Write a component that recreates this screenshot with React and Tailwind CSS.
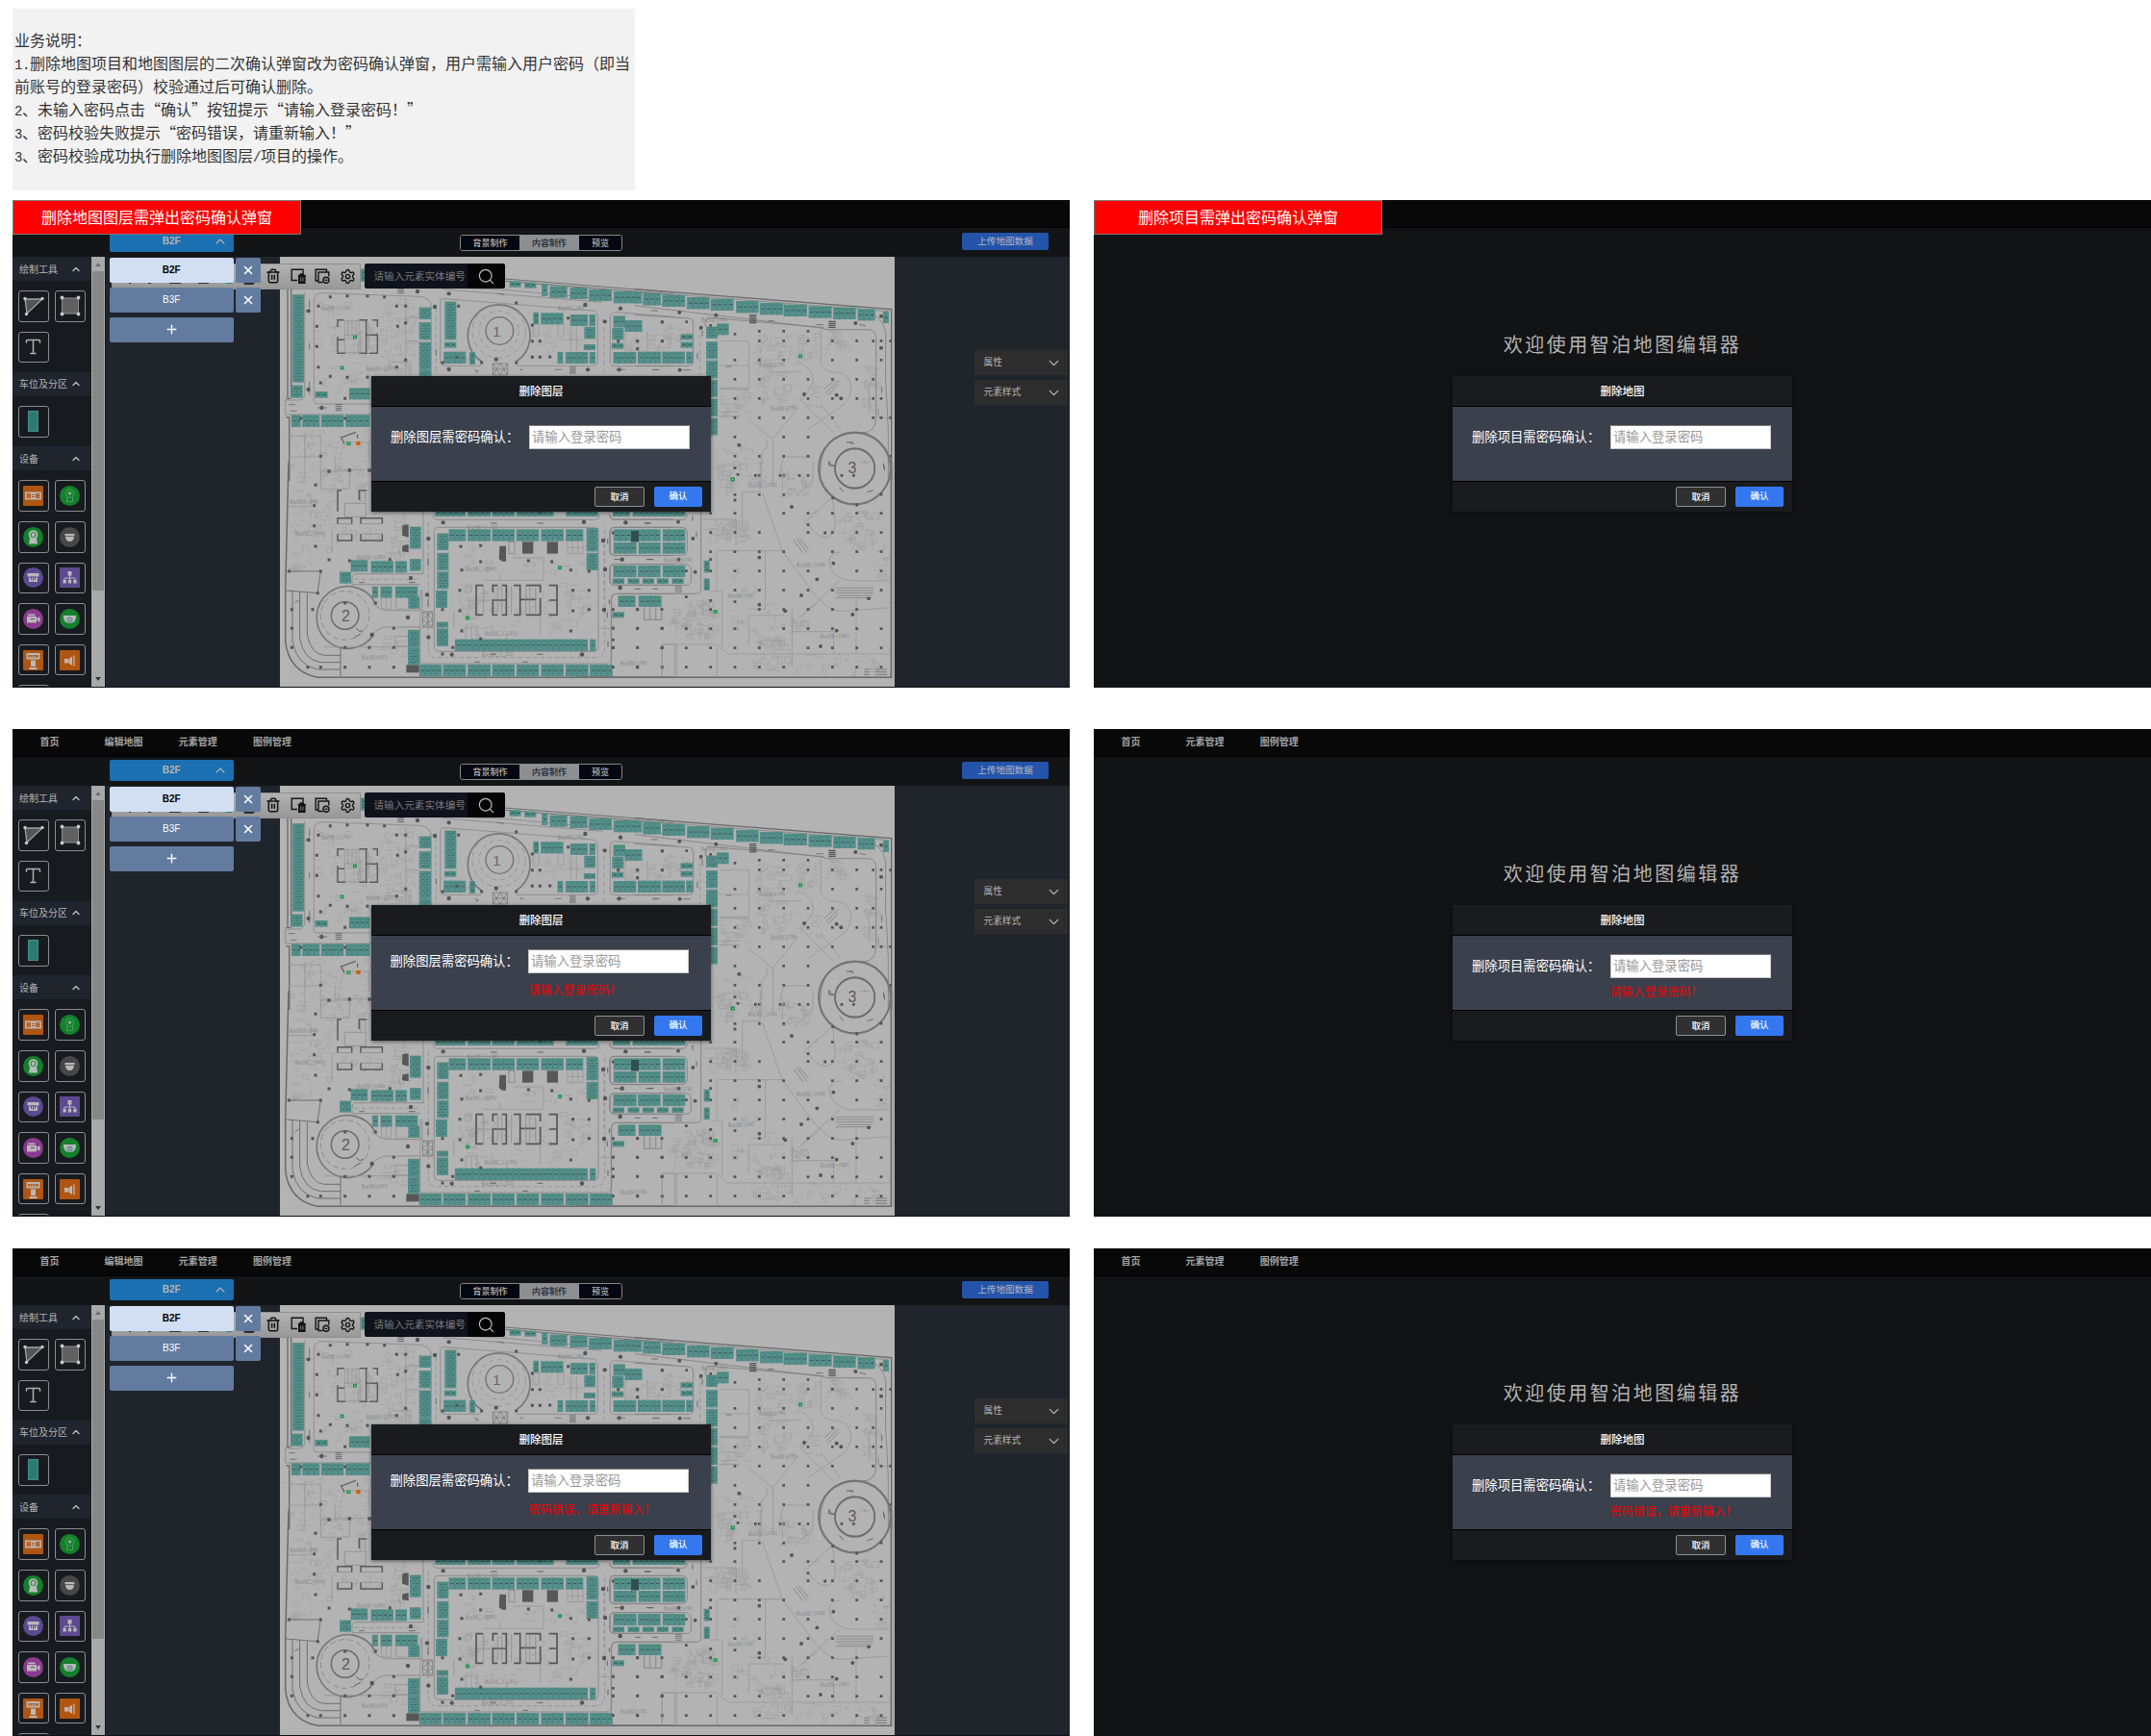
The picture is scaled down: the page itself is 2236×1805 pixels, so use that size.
import React from "react";
import { ChevronUp, ChevronDown, X, Plus, Search, Settings, Trash2, Type } from "lucide-react";

/* ---------- parking map ---------- */

// A block of parking bays; each bay gets a divider, a dash and a green lamp.
function Bays({ list }) {
  return list.map(([x, y, w, h, dir], i) => {
    const vertical = dir === "v";
    const length = vertical ? h : w;
    const n = Math.max(1, Math.round(length / 18));
    const step = length / n;
    let div = "";
    let dash = "";
    let lamp = "";
    for (let k = 0; k < n; k++) {
      const o = k * step;
      if (vertical) {
        div += `M${x} ${y + o}h${w}`;
        dash += `M${x + w * 0.25} ${y + o + step / 2}h5M${x + w * 0.6} ${y + o + step / 2}h5`;
        lamp += `M${x + w - 8} ${y + o + step / 2 - 2}h5`;
      } else {
        div += `M${x + o} ${y}v${h}`;
        dash += `M${x + o + step * 0.22} ${y + h / 2}h${step * 0.56}`;
        lamp += `M${x + o + step / 2 - 3} ${y + 6}h5`;
      }
    }
    if (vertical) div += `M${x + w / 2} ${y}v${h}`;
    return (
      <g key={i}>
        <rect x={x} y={y} width={w} height={h} fill="#568f8b" />
        <path d={div} stroke="#467673" strokeWidth="1.8" />
        <path d={dash} stroke="#2d5654" strokeWidth="2.8" />
        <path d={lamp} stroke="#2a8f55" strokeWidth="3.4" />
      </g>
    );
  });
}

function Dots({ list, r = 4.5 }) {
  return (
    <path
      d={list.map(([x, y]) => `M${x - r} ${y - r}h${r * 2}v${r * 2}h${-r * 2}z`).join("")}
      fill="#555"
    />
  );
}

function Lamps({ list }) {
  return list.map(([x, y], i) => (
    <g key={i}>
      <rect x={x - 6} y={y - 5} width="12" height="11" fill="#15944a" />
      <rect x={x - 2} y={y - 1} width="4" height="3" fill="#a6d8b8" />
    </g>
  ));
}

// Seeded scatter of fine construction lines inside the room areas.
function fineLines(seed, areas) {
  let s = seed;
  const rnd = () => {
    s = (s * 16807) % 2147483647;
    return s / 2147483647;
  };
  for (let i = 0; i < 8; i++) rnd();
  let d = "";
  areas.forEach(([x, y, w, h, n]) => {
    for (let i = 0; i < n; i++) {
      const px = x + rnd() * w;
      const py = y + rnd() * h;
      const a = 4 + rnd() * 20;
      const b = 4 + rnd() * 16;
      const k = Math.floor(rnd() * 4);
      d += `M${px.toFixed(0)} ${py.toFixed(0)}`;
      if (k === 0) d += `h${a.toFixed(0)}v${b.toFixed(0)}`;
      else if (k === 1) d += `v${b.toFixed(0)}h${(-a).toFixed(0)}`;
      else if (k === 2) d += `h${a.toFixed(0)}`;
      else d += `h${a.toFixed(0)}v${b.toFixed(0)}h${(-a).toFixed(0)}z`;
    }
  });
  return d;
}

const NW_BAYS = [
  [72, 230, 36, 273, "v"], [67, 513, 37, 38, "v"], [467, 270, 37, 36, "v"], [467, 317, 37, 53, "v"],
  [467, 378, 37, 84, "v"], [467, 464, 37, 20, "v"], [547, 252, 36, 118, "v"], [547, 377, 36, 18],
  [545, 407, 68, 37], [624, 410, 18, 37, "v"], [144, 531, 38, 20], [250, 520, 64, 36],
  [70, 604, 28, 38], [104, 604, 53, 38], [163, 604, 69, 38], [239, 604, 74, 38],
  [823, 286, 17, 36, "v"], [848, 286, 69, 36], [940, 291, 53, 36], [999, 291, 18, 36],
  [982, 331, 35, 36, "v"], [982, 384, 35, 18], [900, 408, 16, 36], [925, 408, 69, 36], [1000, 408, 17, 36],
  [1074, 295, 36, 36], [1110, 309, 53, 36], [1069, 334, 36, 36, "v"], [1069, 380, 36, 18],
  [1074, 408, 70, 36], [1151, 408, 70, 36], [1228, 408, 68, 36], [1302, 408, 20, 36],
  [750, 187, 35, 19], [797, 191, 35, 18], [851, 197, 17, 37], [876, 203, 53, 36], [939, 207, 53, 36],
  [998, 213, 70, 36], [1075, 219, 87, 37], [1168, 225, 53, 37], [1228, 230, 32, 37],
  [285, 150, 14, 38, "v"],
];

const NE_BAYS = [
  [0, 220, 21, 36], [27, 224, 54, 38], [87, 230, 70, 37], [164, 237, 69, 37], [238, 242, 70, 37],
  [317, 249, 69, 37], [391, 255, 71, 37], [465, 260, 72, 37], [543, 265, 71, 37], [620, 269, 69, 37],
  [696, 274, 53, 36], [775, 282, 17, 36],
  [257, 319, 36, 36], [144, 352, 37, 18], [144, 377, 37, 18], [12, 407, 70, 37], [87, 407, 69, 37], [162, 407, 18, 37],
  [222, 330, 36, 36, "v"], [222, 377, 36, 53, "v"], [222, 436, 36, 54, "v"], [222, 496, 36, 53, "v"],
  [222, 555, 36, 54, "v"], [222, 615, 36, 53, "v"],
];

const SW_BAYS = [
  [438, 204, 35, 68, "v"], [438, 305, 35, 36, "v"], [255, 307, 52, 36], [318, 310, 69, 36], [394, 310, 35, 36],
  [219, 345, 36, 35, "v"], [322, 389, 17, 36], [348, 389, 35, 36], [394, 389, 69, 36], [433, 423, 35, 36, "v"],
  [432, 526, 36, 53, "v"], [432, 581, 36, 53, "v"],
  [518, 150, 94, 21], [620, 150, 70, 21], [696, 150, 69, 21], [772, 150, 115, 21], [926, 150, 98, 21],
  [1073, 150, 52, 21], [1140, 150, 110, 21],
  [523, 225, 36, 51, "v"], [523, 286, 36, 53, "v"], [523, 344, 36, 53, "v"], [519, 403, 36, 53, "v"],
  [522, 501, 36, 17, "v"], [522, 522, 36, 54, "v"],
  [561, 211, 52, 37], [620, 211, 70, 37], [696, 211, 69, 37], [772, 211, 69, 37], [849, 211, 69, 37], [926, 211, 53, 37],
  [989, 209, 36, 71, "v"], [989, 286, 36, 53, "v"], [580, 554, 413, 37], [1001, 554, 17, 37],
  [469, 633, 69, 37], [543, 633, 70, 37], [620, 633, 70, 37], [696, 633, 69, 37], [772, 633, 69, 37],
  [849, 633, 69, 37], [925, 633, 70, 37], [1001, 633, 70, 37],
];

const SE_BAYS = [
  [0, 150, 65, 21], [114, 150, 34, 21], [174, 150, 86, 21], [268, 150, 70, 21],
  [115, 211, 145, 37], [268, 211, 69, 37], [115, 252, 70, 35], [193, 252, 67, 35], [268, 252, 69, 35],
  [114, 324, 71, 36], [191, 324, 69, 36], [268, 324, 69, 36],
  [112, 364, 35, 17], [159, 364, 35, 17], [205, 364, 35, 17], [250, 364, 35, 17], [297, 364, 35, 17],
  [129, 418, 53, 35], [193, 418, 70, 35], [111, 469, 36, 18],
  [395, 310, 18, 36, "v"], [395, 366, 18, 36, "v"],
];

const seColumns = [];
for (let r = 0; r < 9; r++) {
  for (let c = 0; c < 12; c++) {
    const x = 112 + c * 76;
    const y = 161 + r * 60;
    if (y < 500 && x < 400) continue;
    if ((r * 7 + c * 5) % 6 === 0) continue;
    seColumns.push([x, y]);
  }
}
const neColumns = [];
for (let r = 0; r < 9; r++) {
  for (let c = 0; c < 7; c++) {
    if ((r * 5 + c * 3) % 7 === 0) continue;
    if (r > 4 && c > 3 && c < 6) continue;
    neColumns.push([312 + c * 76, 373 + r * 60]);
  }
}

const ZONES = [
  [43, 53, "防火分区十六(702)"], [90, 116, "防火分区十五(387)"], [289, 53, "防火分区二(391)"],
  [438, 65, "防火分区六(361)"], [498, 112, "防火分区五(789)"], [510, 157, "防火分区五(795)"],
  [10, 254, "防火分区十八(301)"], [16, 287, "防火分区二十(602)"], [80, 312, "防火分区十九(803)"],
  [195, 281, "防火分区二十一(207)"], [193, 324, "防火分区二十四(402)"], [213, 391, "防火分区二十二(201)"],
  [210, 413, "防火分区二十二(222)"], [85, 416, "防火分区九(872)"], [354, 422, "防火分区九(793)"],
  [487, 237, "防火分区三(1142)"], [537, 320, "防火分区三(1540)"], [466, 352, "防火分区十(587)"],
  [562, 394, "防火分区一(1907)"], [399, 315, "防火分区二(1730)"],
];

function ParkingMap() {
  return (
    <svg viewBox="0 0 639 447" className="block h-[447px] w-[639px]" fill="none">
      <rect width="639" height="447" fill="#b3b3b3" />

      <g transform="translate(-11 -37) scale(.33333)">
        <path
          d={fineLines(11, [[140, 250, 110, 140, 26], [340, 240, 110, 230, 70], [160, 440, 250, 80, 30], [820, 330, 160, 60, 20], [1110, 345, 150, 60, 28], [60, 650, 260, 160, 60], [215, 310, 120, 100, 30], [600, 410, 40, 30, 3]])}
          stroke="#9e9e9e" strokeWidth="1.6"
        />
        <path d="M735 180L1260 222M735 187L1260 229" stroke="#6d6d6d" strokeWidth="3" />
        <path d="M68 212V550M52 553h15M52 612h10V810M57 210v340" stroke="#6a6a6a" strokeWidth="4" />
        <path
          d="M110 222V540Q110 558 90 558H50V603H318M139 250Q139 224 165 224L470 235Q505 240 505 270V484M139 250V560Q139 570 150 570H318M533 250Q533 242 548 242L1010 279Q1024 281 1024 300V440Q1024 451 1010 451H770M660 451H548Q533 451 533 436V250M1063 300Q1063 283 1080 284L1260 298M1063 300V440Q1063 452 1080 452H1260M533 484H1260M430 200L735 214 1260 262M540 212L1040 253"
          stroke="#858585" strokeWidth="2.4"
        />
        <path d="M520 270V480M1043 330V470" stroke="#8a8a8a" strokeWidth="2" strokeDasharray="16 10" />
        <path d="M662 438A97 97 0 1 1 770 438" stroke="#777" strokeWidth="5" />
        <circle cx="716" cy="343" r="83" stroke="#8a8a8a" strokeWidth="2" strokeDasharray="18 12" />
        <circle cx="716" cy="343" r="62" stroke="#8a8a8a" strokeWidth="2" strokeDasharray="14 12" />
        <circle cx="718" cy="342" r="43" stroke="#707070" strokeWidth="4" />
        <text x="709" y="360" textAnchor="middle" fontSize="46" fill="#666" fontFamily="Liberation Sans, sans-serif">1</text>
        <path d="M697 444h46v36h-46zM697 444l23 36 23-36M697 480l23-36 23 36M697 462h46" stroke="#777" strokeWidth="2.4" />
        <path d="M400 206h20M400 212h20M400 218h20M400 224h20M936 456h20M936 462h20M936 468h20M936 474h20M206 572h20M206 578h20M206 584h20M206 590h20" stroke="#666" strokeWidth="3" />
        <path d="M213 330V308h20M213 360v52h25M280 308h26M322 308h15v22M337 350v62h-26M302 308v104M213 370h22M280 412h26M302 355h34" stroke="#5c5c5c" strokeWidth="4.5" />
        <path d="M235 310h44v100h-44zM245 310v44M258 310v44M270 310v44M235 354h44M310 320v80M285 340v72" stroke="#8e8e8e" strokeWidth="2" />
        <path d="M225 675l45-17M222 672l12 22M275 665v12" stroke="#666" strokeWidth="4" />
        <path d="M425 240v240M425 300h42M425 374h42M142 250L200 270M380 440h60v40M880 320M900 320v40h18v-40M823 320v40h18v-40M940 330v74M958 330v74M925 370h50M1110 345v60M1180 345v60M60 670h100v130M60 735h100M110 660v140M205 735v40h110M250 690h60v55" stroke="#939393" strokeWidth="2" />
        <Bays list={NW_BAYS} />
        <Dots list={[[190, 236], [243, 233], [306, 233], [359, 236], [397, 265], [425, 265], [400, 328], [425, 317], [397, 455], [425, 433], [153, 265], [148, 328], [148, 391], [153, 455], [190, 484], [243, 487], [306, 487], [160, 504], [236, 553], [590, 265], [585, 424], [540, 441], [662, 441], [770, 441], [770, 255], [820, 324], [844, 374], [820, 374], [875, 423], [820, 424], [844, 424], [932, 302], [1225, 315], [1148, 374], [1225, 374], [1088, 374], [1148, 398], [186, 780], [250, 777], [312, 777], [160, 733], [98, 615], [236, 615]]} />
        <g fill="#555">
          {[[122, 280], [122, 525], [516, 267], [462, 219], [560, 226], [707, 431], [560, 462], [985, 261], [1095, 272], [1046, 313], [993, 463], [1091, 463], [163, 582]].map(([x, y]) => (
            <circle key={`${x}-${y}`} cx={x} cy={y} r="6.5" />
          ))}
        </g>
        <path d="M125 245v25M125 380v20M125 500v40M520 400v20M640 463l12 5-8 5M780 463h12M890 463h22M1080 463h30M1195 463h22M150 582h30M60 572h20M65 592h20M710 225l22 4" stroke="#666" strokeWidth="2.4" />
        <Lamps list={[[267, 361], [227, 457], [247, 693]]} />
        <rect x="271" y="687" width="13" height="12" fill="#c8601c" />
      </g>

      <g transform="translate(369 -37) scale(.33333)">
        <path
          d={fineLines(29, [[380, 350, 180, 90, 70], [380, 450, 90, 110, 50], [260, 520, 80, 90, 30], [85, 315, 80, 60, 22], [705, 440, 50, 160, 34], [600, 335, 60, 60, 18], [480, 490, 110, 90, 16], [250, 700, 130, 100, 24]])}
          stroke="#9e9e9e" strokeWidth="1.6"
        />
        <path d="M0 212L800 275V810" stroke="#686868" strokeWidth="4" />
        <path d="M0 219L792 281" stroke="#777" strokeWidth="2" />
        <path
          d="M0 263L580 333 600 338H725Q752 338 752 365V610Q752 660 710 660 640 655 600 700 575 735 578 810M0 292L170 303Q182 305 182 318V436Q182 451 168 451H0M220 330V310Q222 300 235 301L590 332M715 283Q770 290 782 345V500Q786 560 790 650V810"
          stroke="#808080" strokeWidth="2.6"
        />
        <path d="M203 330V480" stroke="#8a8a8a" strokeWidth="2" strokeDasharray="14 10" />
        <path
          d="M265 374h90v150h-90M265 520h90M580 340V440Q585 470 630 472 672 475 674 520 672 560 640 580L540 650M355 620L430 680 510 580M510 440Q560 460 556 505L520 560 620 660M430 680V810M410 680Q420 700 395 720V810M450 810Q455 740 470 735H550M580 575L620 620 640 650M730 500V600M420 470h100M265 450h90M760 583v30h40M265 570h60M265 595h60M265 608h60"
          stroke="#949494" strokeWidth="2.2"
        />
        <path d="M590 525l34-30M597 535l38-38M603 542l32-34" stroke="#888" strokeWidth="3" />
        <path d="M357 293h22M357 299h22M357 305h22M357 311h22M357 317h22M604 313h22M604 319h22M604 325h22M604 331h22" stroke="#555" strokeWidth="3.4" />
        <circle cx="685" cy="772" r="112" stroke="#777" strokeWidth="5" />
        <circle cx="686" cy="772" r="62" stroke="#707070" strokeWidth="4.5" />
        <text x="678" y="785" textAnchor="middle" fontSize="48" fill="#5c5c5c" fontFamily="Liberation Sans, sans-serif">3</text>
        <path d="M605 748l8 15h14M670 690l12 5M775 755l4 20M660 690h20" stroke="#666" strokeWidth="3" />
        <path d="M702 752h30M718 746v10" stroke="#8c8c8c" strokeWidth="2" />
        <Bays list={NE_BAYS} />
        <Dots r={4} list={[[85, 314], [161, 314], [85, 374], [8, 398], [8, 374], [236, 325], [388, 343], [464, 343], [540, 343], [312, 352], [743, 374], [743, 493], [743, 553], [743, 613], [797, 374], [797, 613], [797, 733], ...neColumns.filter(([x, y]) => !(x > 560 && y > 640))]} />
        <g fill="#555">
          {[[139, 284], [253, 293], [206, 332], [140, 464], [688, 318], [768, 395], [629, 542], [643, 553], [528, 540], [325, 698], [768, 296]].map(([x, y]) => (
            <circle key={`${x}-${y}`} cx={x} cy={y} r="6" />
          ))}
        </g>
        <path d="M52 279h20M55 464h20M150 464h24M415 311h20M565 323h22M700 322l20 4M770 515v20M195 410v20M210 340v20M285 453h16" stroke="#666" strokeWidth="2.6" />
        <Lamps list={[[516, 421], [305, 805]]} />
      </g>

      <g transform="translate(-11 213) scale(.33333)">
        <path
          d={fineLines(47, [[60, 0, 250, 80, 30], [60, 90, 140, 200, 50], [380, 160, 50, 130, 30], [215, 200, 130, 40, 12], [590, 380, 50, 110, 30], [905, 380, 80, 130, 30], [590, 260, 100, 100, 12], [760, 295, 220, 60, 16], [600, 495, 300, 45, 18], [645, 390, 250, 85, 34], [350, 530, 80, 60, 16], [70, 310, 80, 20, 8]])}
          stroke="#9d9d9d" strokeWidth="1.6"
        />
        <path d="M60 0L50 400V560Q60 655 150 673H1260" stroke="#6a6a6a" strokeWidth="4.5" />
        <path d="M55 342H160L150 410 52 402M72 402V560Q85 635 150 648H222M95 406V550Q105 618 160 626H222M118 410V540Q130 600 170 604H222M222 578V670" stroke="#6e6e6e" strokeWidth="3" />
        <path
          d="M480 155V350H270Q258 350 258 366V383H470M510 165Q510 181 525 181H1015Q1030 181 1030 165M514 215Q514 205 530 205H1012Q1026 205 1026 220V575Q1026 592 1010 592H530Q514 592 514 575V215M320 440Q345 463 370 464H476V400M320 540Q340 516 370 516H470V630H1050Q1067 630 1067 610V430Q1067 412 1085 412H1260M1060 165Q1062 180 1075 180H1260M1061 220Q1062 205 1075 205H1260M1061 220V280Q1062 293 1075 293H1260M1061 335Q1062 320 1075 320H1260M1061 335V370Q1062 385 1075 385H1260"
          stroke="#858585" strokeWidth="2.6"
        />
        <path d="M265 367H470M496 190V590Q500 610 520 611H1020Q1045 608 1046 580V200" stroke="#858585" strokeWidth="2" strokeDasharray="14 9" />
        <path d="M478 468h31v48h-31zM478 468l31 24-31 24M509 468l-31 24 31 24M494 468v48" stroke="#777" strokeWidth="2.4" />
        <path d="M330 440A97 97 0 1 0 325 540" stroke="#777" strokeWidth="5" />
        <circle cx="236" cy="480" r="76" stroke="#808080" strokeWidth="2.4" strokeDasharray="18 10" />
        <circle cx="236" cy="480" r="43" stroke="#6c6c6c" strokeWidth="4.5" />
        <text x="238" y="497" textAnchor="middle" fontSize="48" fill="#5c5c5c" fontFamily="Liberation Sans, sans-serif">2</text>
        <path d="M213 155V90h12M280 120V90h24M213 194v-18h44v18M285 194v-18h67v18M213 226v20h44v-20M285 226v20h67v-20" stroke="#595959" strokeWidth="4.5" />
        <path d="M235 130h66v42h-66zM285 90v36M299 90v36M213 194h44M213 226h44M285 194h67M285 226h67" stroke="#8a8a8a" strokeWidth="2.4" />
        <path d="M645 386v92M643 386h24M643 478h24M712 386h-15v22M697 430v48h15M725 386h14v92h-14M762 386h20v92h-20M800 386h45v22M845 425v53h-45M872 386h25v92h-25M782 430h50M697 432h40M872 432h25" stroke="#555" strokeWidth="5" />
        <path d="M668 388v88M755 388v88M800 388v88M812 388v88M712 395v75M725 395v75M830 395v75M645 432h50" stroke="#898989" strokeWidth="2.2" />
        <g fill="#575757">
          <rect x="789" y="250" width="34" height="37" /><rect x="866" y="250" width="34" height="37" />
          <path d="M718 263h20v48h-12l-10-8zM415 198l19-2v40l-20-6zM415 262l19-3v24l-20-3z" /><rect x="427" y="634" width="40" height="24" />
        </g>
        <rect x="747" y="250" width="18" height="37" stroke="#858585" strokeWidth="2.4" />
        <path d="M930 250v37h48v-37M945 250v37M962 250v37M932 268h46M350 425v34h30v-34M365 425v34M395 425v34h35M470 526V400M392 545h40M392 575h40M392 545v30M612 516v40M630 516v40M648 516v40M612 516h36M575 516v-50M665 370h190V300H760M720 350v20M845 540v-60M1025 520h46M160 30h90v55h-90zM60 140h70v-30M195 200v80M170 578h260M1225 570h40v100M1225 570v100M1170 455v38M1188 455v38M1206 455v38M1224 455v38M1170 493h54" stroke="#909090" strokeWidth="2.2" />
        <Bays list={SW_BAYS} />
        <rect x="1128" y="216" width="24" height="34" fill="#314f4d" />
        <Dots list={[[186, 30], [250, 27], [312, 27], [144, 73], [140, 137], [140, 200], [144, 264], [186, 306], [250, 309], [376, 305], [62, 342], [160, 342], [135, 461], [151, 410], [70, 461], [70, 520], [70, 580], [236, 441], [236, 580], [236, 641], [312, 580], [312, 641], [388, 520], [388, 580], [388, 641], [120, 641], [160, 641], [331, 441], [597, 265], [659, 262], [659, 312], [600, 338], [594, 401], [594, 465], [600, 528], [659, 553], [808, 309], [881, 312], [940, 338], [947, 401], [947, 465], [940, 528], [997, 342], [997, 401], [997, 461], [572, 580], [540, 461], [540, 600], [845, 160], [1072, 222], [1148, 222], [1072, 461], [1148, 461], [1072, 520], [1148, 520], [1148, 580], [1072, 580], [1148, 641], [1225, 641], [1225, 520], [1225, 580]]} />
        <g fill="#555">
          {[[542, 190], [981, 188], [1111, 190], [496, 240], [1041, 246], [441, 363], [492, 415], [432, 486], [496, 548], [569, 602], [975, 601], [1044, 462], [1047, 336], [1094, 393], [1100, 305], [320, 540]].map(([x, y]) => (
            <circle key={`${x}-${y}`} cx={x} cy={y} r="6.5" />
          ))}
        </g>
        <path d="M690 192h20M835 192h20M1170 192h20M690 601h18M835 601h18M790 625h16M640 625h16M495 300v25M495 430v20M270 520l12 10 12-4M265 548l18-10M1055 240v16M1054 470v16M280 377h16M435 377h20M1180 305h18M80 440l12-8" stroke="#606060" strokeWidth="2.8" />
        <Lamps list={[[618, 487], [906, 330]]} />
      </g>

      <g transform="translate(309 213) scale(.33333)">
        <path
          d={fineLines(83, [[410, 180, 120, 70, 60], [325, 430, 100, 110, 90], [820, 155, 100, 120, 50], [550, 540, 90, 40, 40], [640, 30, 70, 70, 26], [670, 490, 40, 40, 14], [440, 0, 50, 80, 24], [520, 40, 100, 20, 6], [540, 595, 400, 55, 50], [290, 460, 20, 70, 14], [470, 480, 90, 80, 12], [590, 440, 50, 90, 10], [920, 250, 40, 110, 12], [450, 300, 120, 110, 7], [670, 130, 90, 60, 5]])}
          stroke="#9e9e9e" strokeWidth="1.7"
        />
        <path d="M979 0V673H0" stroke="#686868" strokeWidth="4.5" />
        <path d="M985 0V678" stroke="#909090" strokeWidth="2" />
        <circle cx="866" cy="20" r="112" stroke="#747474" strokeWidth="5" />
        <circle cx="866" cy="20" r="62" stroke="#6c6c6c" strokeWidth="4.5" />
        <path d="M785 0v12h15M818 80l12 14M905 95l18-6M955 10l4 18" stroke="#666" strokeWidth="3" />
        <path
          d="M386 155V400Q386 412 370 412H120Q106 412 106 430V675M344 165Q342 181 330 181H120Q103 181 102 165M103 220Q103 205 118 205H325Q343 205 343 222V275Q343 292 328 292H118Q103 292 103 277V220M103 335Q103 320 118 320H340Q355 322 355 340V370Q355 385 340 385H118Q103 385 103 370V335"
          stroke="#808080" strokeWidth="2.6"
        />
        <path
          d="M578 100L640 280 745 420Q790 470 830 466L979 455M720 195Q745 235 775 236 800 232 805 200 800 150 797 110L720 180M785 310Q790 280 825 282M785 310Q795 370 860 372H979M820 370L700 480M750 440L690 490M440 278H640M587 278V460H540M515 95h55V45Q570 0 575 0M515 95v120M265 570V673M436 580V673M310 570V673M265 570H435L470 600H979M435 280V400M452 405V580M452 405H415M670 490v40h130V600M535 480h110M535 480v90M670 460V640M870 420V600M390 180h105V260M640 90V20M735 0V60L680 110"
          stroke="#939393" strokeWidth="2.2"
        />
        <path d="M675 245l30 40M684 240l32 42M692 238l30 36" stroke="#888" strokeWidth="3" />
        <path d="M806 394h118M806 402h118M806 410h118M815 418h104M806 425h112" stroke="#888" strokeWidth="2.6" />
        <path d="M305 388h22M305 394h22M305 400h22M305 406h22M895 648h16M895 656h16M895 664h16M930 648h36M930 656h36M930 664h36" stroke="#777" strokeWidth="3" />
        <path d="M208 455v38h55v-38M226 455v38M244 455v38" stroke="#888" strokeWidth="2.4" />
        <Bays list={SE_BAYS} />
        <rect x="168" y="216" width="24" height="34" fill="#314f4d" />
        <path d="M84 430V240" stroke="#858585" strokeWidth="2" strokeDasharray="14 9" />
        <Dots r={4.2} list={[...seColumns.filter(([x, y]) => x < 975 && y < 650), [492, 20], [501, 40], [556, 43], [633, 43], [693, 43], [825, 43], [862, 43], [492, 120], [416, 305], [340, 341], [340, 422], [416, 433], [492, 437], [188, 461], [264, 461], [773, 222], [720, 161], [720, 197], [797, 113], [872, 135], [948, 102], [112, 556]]} />
        <g fill="#555">
          {[[21, 188], [151, 190], [315, 188], [361, 240], [140, 305], [317, 305], [368, 344], [134, 394], [82, 246], [87, 336], [84, 462], [15, 602], [669, 141], [748, 367], [699, 417], [649, 466], [859, 477], [809, 527], [759, 576], [799, 317], [909, 427], [568, 299], [568, 446]].map(([x, y]) => (
            <circle key={`${x}-${y}`} cx={x} cy={y} r="5.8" />
          ))}
        </g>
        <path d="M210 192h20M115 305h25M215 305h22M235 397h16M180 397h18M360 170v15M372 220v15M96 560v18M100 430v14" stroke="#606060" strokeWidth="2.8" />
        <Lamps list={[[485, 55], [431, 467]]} />
      </g>

      <g fill="#7c7c7c" fontSize="4.6" fontFamily="'Noto Sans CJK SC', sans-serif">
        {ZONES.map(([x, y, t], i) => (
          <text key={i} x={x} y={y + 1.5} textLength={t.length * 2.7} lengthAdjust="spacingAndGlyphs">{t}</text>
        ))}
      </g>
    </svg>
  );
}

/* ---------- sidebar ---------- */

function ToolBox({ children }) {
  return (
    <div className="flex h-[32.6px] w-8 shrink-0 items-center justify-center rounded-[3px] border border-[#8c8d8f] pr-px">
      {children}
    </div>
  );
}

const glyphs = {
  triangle: (
    <svg viewBox="0 0 22 22" className="h-[22px] w-[22px]" fill="none" stroke="#a4a4a4" strokeWidth="1.3">
      <path d="M2 4H20L4 19Z" fill="#555" />
      <g fill="#c8c8c8" stroke="none"><circle cx="2" cy="3.500" r="1.7" /><circle cx="20" cy="3.500" r="1.7" /><circle cx="3.500" cy="19.500" r="1.7" /></g>
    </svg>
  ),
  square: (
    <svg viewBox="0 0 22 22" className="h-[22px] w-[22px]" fill="none" stroke="#8a8a8a" strokeWidth="1.1">
      <rect x="2.500" y="3" width="17" height="16" fill="#606060" />
      <g fill="#c8c8c8" stroke="none"><circle cx="2.500" cy="2.500" r="1.9" /><circle cx="19.500" cy="2.500" r="1.9" /><circle cx="2.500" cy="19.500" r="1.9" /><circle cx="19.500" cy="19.500" r="1.9" /></g>
    </svg>
  ),
  text: <Type size={21} strokeWidth={1.7} color="#b0b0b0" />,
  bay: <div className="h-[22px] w-[11px] border border-[#4b8c87] bg-[#2c7a74]" />,
};

function Device({ color, square, children }) {
  return (
    <svg viewBox="0 0 21 21" className="h-[21px] w-[21px]">
      {square ? <rect width="21" height="21" rx="1" fill={color} /> : <circle cx="10.5" cy="10.5" r="10.5" fill={color} />}
      {children}
    </svg>
  );
}

const W = "#b8b8b8";
const devices = [
  <Device color="#b05512" square>
    <rect x="2" y="6.5" width="17" height="8" fill={W} />
    <path d="M4 8.500h3.500v4H4zM13.500 8.500H17v4h-3.500zM9 9.500h3M9 11.500h3M5.700 8.500v4M4 10.500h3.500M15.200 8.500v4M13.500 10.500H17" stroke="#b05512" fill="none" strokeWidth="1" />
  </Device>,
  <Device color="#13802b">
    <circle cx="10.5" cy="8" r="4.2" fill="none" stroke="#73ac7f" strokeDasharray="1.5 .8" />
    <circle cx="10.5" cy="8" r="1.8" fill="#7fb58a" />
    <path d="M7.5 12v4.5h6V12" stroke="#73ac7f" fill="none" strokeDasharray="1.5 .8" />
  </Device>,
  <Device color="#13802b">
    <circle cx="10.5" cy="8" r="4.8" fill={W} />
    <path d="M7 11h7l1 6.500H6z" fill={W} />
    <circle cx="10.500" cy="8" r="2.600" fill="none" stroke="#13802b" strokeWidth="1" />
  </Device>,
  <Device color="#474747">
    <path d="M5.500 7h10v2.200h-10zM6 10h9q-.5 5-4.500 5T6 10z" fill={W} />
  </Device>,
  <Device color="#5b4a90">
    <path d="M4.500 6h12v3.500h-12zM6 10.500h9V15H6z" fill={W} />
    <path d="M8.500 9.500V13M10.500 9.500V14M12.500 9.500V13" stroke="#5b4a90" />
  </Device>,
  <Device color="#5b4a90" square>
    <path d="M8.500 4h4v4.500h-4zM3.500 13h3.300v3.500H3.500zM8.900 13h3.300v3.500H8.900zM14.300 13h3.300v3.500h-3.300z" fill={W} />
    <path d="M10.500 8v5M5 13v-2h11v2" stroke={W} fill="none" />
  </Device>,
  <Device color="#8b3a8f">
    <path d="M4 8h10v6.500H4zM14.500 10L17.500 8v6l-3-2zM5 5.500h7.500v1.700H5z" fill={W} />
    <path d="M8 10.500h4" stroke="#8b3a8f" />
  </Device>,
  <Device color="#13802b">
    <path d="M4 7h13v2.500q-1 5.500-6.500 5.500T4 9.500z" fill={W} />
    <circle cx="10.500" cy="11.500" r="2.600" fill="none" stroke="#3a7f82" strokeWidth="1" />
    <circle cx="10.500" cy="11.500" r=".9" fill="#3a7f82" />
  </Device>,
  <Device color="#b05512" square>
    <path d="M3.500 3h14v6.500h-14zM8 10.500h5V17H8zM6.500 18h8v2h-8z" fill={W} />
    <path d="M5 6.300h11" stroke="#b05512" strokeWidth="2.400" />
    <path d="M6.500 6.300h8" stroke={W} strokeWidth="1" strokeDasharray="1.500 1" />
  </Device>,
  <Device color="#b05512" square>
    <path d="M5 9h4v4.500H5zM9.500 9L13 6.500v9.500l-3.500-2.500zM14.200 5.500h1.300v11h-1.300z" fill={W} />
  </Device>,
];

function SectionHead({ children }) {
  return (
    <div className="flex h-[25px] shrink-0 items-center justify-between bg-[#20242c] pl-[7px] pr-[10px] text-[10px] leading-none text-[#b4b4b4]">
      <span className="whitespace-nowrap">{children}</span>
      <ChevronUp size={12} strokeWidth={3} className="shrink-0" />
    </div>
  );
}

function ToolGrid({ children }) {
  return <div className="flex shrink-0 flex-wrap gap-x-1.5 gap-y-2.5 pb-[9.800px] pl-1.5 pt-[10px]">{children}</div>;
}

function Sidebar() {
  return (
    <div className="flex h-full w-[96px] shrink-0">
      <div className="flex w-[82px] shrink-0 flex-col overflow-hidden bg-[#171a1e]">
        <SectionHead>绘制工具</SectionHead>
        <ToolGrid>
          <ToolBox>{glyphs.triangle}</ToolBox>
          <ToolBox>{glyphs.square}</ToolBox>
          <ToolBox>{glyphs.text}</ToolBox>
        </ToolGrid>
        <SectionHead>车位及分区</SectionHead>
        <ToolGrid>
          <ToolBox>{glyphs.bay}</ToolBox>
        </ToolGrid>
        <SectionHead>设备</SectionHead>
        <ToolGrid>
          {devices.map((d, i) => (
            <ToolBox key={i}>{d}</ToolBox>
          ))}
          <ToolBox />
        </ToolGrid>
      </div>
      <div className="flex w-[14px] shrink-0 flex-col items-center bg-[#a9a9a9]">
        <div className="mt-[6px] h-0 w-0 border-x-[3px] border-b-[4px] border-x-transparent border-b-[#6d6d6d]" />
        <div className="mt-[5px] h-[332px] w-[12px] bg-[#878787]" />
        <div className="mt-auto mb-[6px] h-0 w-0 border-x-[3px] border-t-[4px] border-x-transparent border-t-[#333]" />
      </div>
    </div>
  );
}

/* ---------- shared pieces ---------- */

function Dialog({ title, label, error, lift, wide }) {
  return (
    <div className="absolute left-[373px] top-[183px] flex h-[141px] w-[353px] flex-col bg-[#1a1b1e] shadow-[0_1px_4px_rgba(0,0,0,0.55)]">
      <div className="flex h-[31px] items-center justify-center text-[11.500px] font-medium leading-none text-white">{title}</div>
      <div className="h-[79px] border-y border-black bg-[#3b404d]">
        <div className={`flex items-center ${lift ? "pl-[19.500px] pt-[14px]" : "pl-5 pt-[19px]"}`}>
          <span className={`whitespace-nowrap pb-px text-[13.330px] leading-none text-white ${wide ? "w-[144px]" : "w-[143.500px]"}`}>{label}</span>
          <div className="flex h-[25px] w-[167px] items-center border border-[#c8c8c8] border-t-[#7b7b7b] bg-white pb-px pl-[2px] text-[13.330px] leading-none text-[#999]">
            请输入登录密码
          </div>
        </div>
        {error && (
          <div className={`pl-[163.500px] text-[12px] leading-[14px] text-[#f00000] ${lift ? "mt-[10px]" : "mt-[7px]"}`}>{error}</div>
        )}
      </div>
      <div className="flex flex-1 items-start justify-end gap-2.5 pr-[9px] pt-[5px] text-[9.500px] font-medium leading-none text-white">
        <div className="flex h-[21px] w-[52px] items-center justify-center rounded-[2px] border border-[#8f8f8f] bg-[#303030]">取消</div>
        <div className="flex h-[21px] w-[50px] items-center justify-center rounded-[2px] bg-[#3478f0] pb-[2px]">确认</div>
      </div>
    </div>
  );
}

function Badge({ children }) {
  return (
    <div className="absolute left-0 top-0 flex h-9 w-[300px] items-center justify-center border border-[#797979] bg-[#ff0000] pb-[3px] text-[16px] leading-none text-white">
      {children}
    </div>
  );
}

/* ---------- toolbar over the map ---------- */

function LayerIcon({ minus }) {
  return (
    <svg viewBox="0 0 16 16" className="h-4 w-4 shrink-0" fill="none" stroke="#151515" strokeWidth="1.400">
      {minus ? (
        <>
          <path d="M3.500 13H1.200V1.200H12.500V3.500M8.500 14.500H4V4H14.800V8.500" />
          <circle cx="12" cy="12.300" r="3" />
          <path d="M10.600 12.300h2.800" />
        </>
      ) : (
        <>
          <path d="M7 12.500H1.200V1.200H13V5.500" />
          <path d="M7.800 7.500h8M10.300 7.200V6h3v1.200" />
          <path d="M8.700 8h6.200v7.200H8.700z" fill="#151515" />
          <path d="M10.700 9.500v4M12.900 9.500v4" stroke="#999" strokeWidth=".8" />
        </>
      )}
    </svg>
  );
}

function Toolbar() {
  return (
    <div className="absolute left-[103px] top-[66px] flex h-[26px] items-center">
      <div className="flex h-[27px] w-[259px] items-center gap-[9.500px] border border-[#8e8e8e] bg-gradient-to-b from-[#b2b2b2] to-[#989898] text-[#151515]">
        <div className="flex h-full w-[124px] shrink-0 items-end justify-between pb-[5px] pl-[17px]">
          {[2, 3, 12, 11].map((w, i) => (
            <div key={i} className="h-[3px] bg-[#333]" style={{ width: w }} />
          ))}
          <div className="h-[4px] w-[6px] bg-[#258a7c]" />
        </div>
        <div className="mb-[4px] ml-[2px] h-[3px] w-[12px] shrink-0 self-end rounded-b-full bg-[#2b2b33]" />
        <Trash2 size={16} strokeWidth={2.300} className="ml-[2px] shrink-0" />
        <LayerIcon />
        <LayerIcon minus />
        <Settings size={17} strokeWidth={2} className="shrink-0" />
      </div>
      <div className="ml-[4px] flex h-[26px] w-[146px] overflow-hidden rounded-[2px]">
        <div className="flex w-[107px] shrink-0 items-center overflow-hidden whitespace-nowrap bg-[#10131c] pl-[9.500px] text-[10.600px] leading-none text-[#77797d]">
          请输入元素实体编号
        </div>
        <div className="flex flex-1 items-center justify-center bg-[#050505] text-[#c0c0c0]">
          <Search size={19} strokeWidth={1.500} />
        </div>
      </div>
    </div>
  );
}

function FloorMenu() {
  const item = "flex h-[25.500px] w-[128.500px] items-center justify-center rounded-[2px] font-['Liberation_Sans',sans-serif] text-[10px] leading-none";
  const close = "flex h-[25.500px] w-[26px] items-center justify-center rounded-[2px] bg-[#637b9f] text-white";
  return (
    <div className="absolute left-[101px] top-[60px] flex flex-col gap-[5.500px]">
      <div className="flex gap-[2.500px]">
        <div className={`${item} bg-[#d2dff3] font-bold text-black`}>B2F</div>
        <div className={close}><X size={14} strokeWidth={2.600} /></div>
      </div>
      <div className="flex gap-[2.500px]">
        <div className={`${item} bg-[#637b9f] text-white`}>B3F</div>
        <div className={close}><X size={14} strokeWidth={2.600} /></div>
      </div>
      <div className={`${item} bg-[#637b9f] text-white`}><Plus size={15} strokeWidth={2.200} /></div>
    </div>
  );
}

function PropertyRow({ children }) {
  return (
    <div className="flex h-[26px] items-center justify-between bg-[#2d2d2d] pl-[9.500px] pr-[6px] text-[9.700px] leading-none text-[#b4b4b4]">
      {children}
      <ChevronDown size={17} strokeWidth={1.900} />
    </div>
  );
}

function EditorPanel({ badge, error }) {
  return (
    <div className="relative flex h-[507px] w-[1099px] flex-col overflow-hidden bg-[#20242b]">
      <div className="flex h-[29px] shrink-0 items-center border-b border-black bg-[#080808] pb-[2px] pl-[28.500px] text-[10px] font-bold leading-none text-[#a3a3a3]">
        {!badge && (
          <>
            <span className="w-[67px]">首页</span>
            <span className="w-[77.300px]">编辑地图</span>
            <span className="w-[77.300px]">元素管理</span>
            <span>图例管理</span>
          </>
        )}
      </div>
      <div className="flex h-[30px] shrink-0 items-start bg-[#121416] pl-[101px]">
        <div className="mt-[3px] flex h-[22px] w-[128.500px] items-center rounded-[2px] bg-[#1a70b1] font-['Liberation_Sans',sans-serif] text-[10px] font-bold leading-none text-[#b4b4b4]">
          <span className="flex-1 pl-[22px] text-center">B2F</span>
          <ChevronUp size={16} strokeWidth={1.700} className="mr-[6px]" />
        </div>
        <div className="ml-[235.500px] mt-[7px] flex h-[17px] w-[169px] overflow-hidden rounded-[3px] border border-[#85878a] text-[9px] font-medium leading-none text-[#b8b8b8]">
          <div className="flex w-[61px] items-center justify-center bg-[#030711]">背景制作</div>
          <div className="flex w-[62px] items-center justify-center bg-[#8d8f93] text-[#1f232b]">内容制作</div>
          <div className="flex flex-1 items-center justify-center bg-[#030711]">预览</div>
        </div>
        <div className="ml-auto mr-[22px] mt-[5px] flex h-[18px] w-[90px] items-center justify-center rounded-[2px] bg-[#2454a9] text-[9.600px] leading-none text-[#b4b8c2]">
          上传地图数据
        </div>
      </div>
      <div className="flex h-[448px] shrink-0 overflow-hidden border-b border-[#101114]">
        <Sidebar />
        <div className="w-[182px] shrink-0 border-l border-[#15171b]" />
        <div className="shrink-0"><ParkingMap /></div>
        <div className="flex flex-1 flex-col gap-[5px] pl-[83px] pr-[2px] pt-[97px]">
          <PropertyRow>属性</PropertyRow>
          <PropertyRow>元素样式</PropertyRow>
        </div>
      </div>
      <Toolbar />
      <FloorMenu />
      <Dialog title="删除图层" label="删除图层需密码确认：" error={error} lift={!!error} wide={!error} />
      {badge && <Badge>{badge}</Badge>}
    </div>
  );
}

function WelcomePanel({ badge, error }) {
  return (
    <div className="relative flex h-[507px] w-[1099px] flex-col overflow-hidden bg-[#121315]">
      <div className="flex h-[29px] shrink-0 items-center border-b border-black bg-[#080808] pb-[2px] pl-[28.500px] text-[10px] font-bold leading-none text-[#a3a3a3]">
        {!badge && (
          <>
            <span className="w-[67px]">首页</span>
            <span className="w-[77.300px]">元素管理</span>
            <span>图例管理</span>
          </>
        )}
      </div>
      <h1 className="mt-[108px] text-center text-[20px] leading-[26px] tracking-[2.500px] text-[#b3b3b3]">欢迎使用智泊地图编辑器</h1>
      <Dialog title="删除地图" label="删除项目需密码确认：" error={error} wide />
      {badge && <Badge>{badge}</Badge>}
    </div>
  );
}

/* Latin characters sit in half-width cells of the 16px note grid. */
function Half({ children }) {
  return <span className="inline-block w-2 font-['Liberation_Mono',monospace] text-[14px] leading-none">{children}</span>;
}

function NoteLine({ children }) {
  return <p className="h-6 leading-6">{children}</p>;
}

export default function App() {
  return (
    <div className="h-[1805px] w-[2236px] overflow-hidden bg-white pl-[13px] pt-[9px] font-['Noto_Sans_CJK_SC',sans-serif]">
      <div className="h-[189px] w-[647px] whitespace-nowrap bg-[#f2f2f2] pl-[2px] pt-[20px] text-[16px] text-[#333]">
        <NoteLine>业务说明：</NoteLine>
        <NoteLine><Half>1</Half><Half>.</Half>删除地图项目和地图图层的二次确认弹窗改为密码确认弹窗，用户需输入用户密码（即当</NoteLine>
        <NoteLine>前账号的登录密码）校验通过后可确认删除。</NoteLine>
        <NoteLine><Half>2</Half>、未输入密码点击“确认”按钮提示“请输入登录密码！”</NoteLine>
        <NoteLine><Half>3</Half>、密码校验失败提示“密码错误，请重新输入！”</NoteLine>
        <NoteLine><Half>3</Half>、密码校验成功执行删除地图图层<Half>/</Half>项目的操作。</NoteLine>
      </div>
      <div className="mt-2.5 flex gap-[25px]">
        <EditorPanel badge="删除地图图层需弹出密码确认弹窗" />
        <WelcomePanel badge="删除项目需弹出密码确认弹窗" />
      </div>
      <div className="mt-[43px] flex gap-[25px]">
        <EditorPanel error="请输入登录密码！" />
        <WelcomePanel error="请输入登录密码！" />
      </div>
      <div className="mt-[33px] flex gap-[25px]">
        <EditorPanel error="密码错误，请重新输入！" />
        <WelcomePanel error="密码错误，请重新输入！" />
      </div>
    </div>
  );
}
